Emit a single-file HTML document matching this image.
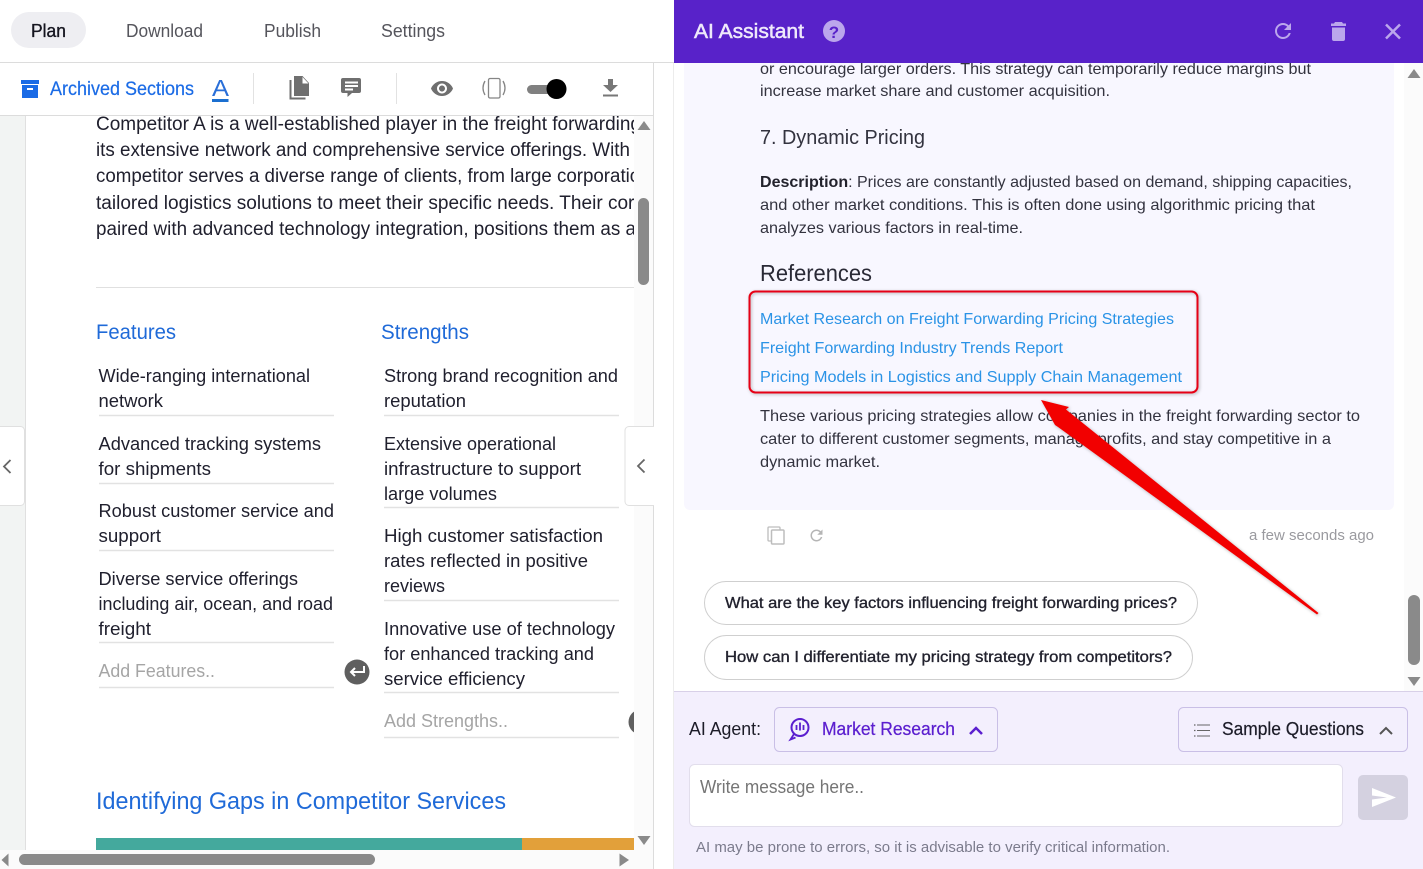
<!DOCTYPE html>
<html lang="en"><head><meta charset="utf-8"><title>AI Assistant</title>
<style>
html,body{margin:0;padding:0;width:1423px;height:869px;overflow:hidden;background:#fff}
svg{display:block}
text{font-family:"Liberation Sans",sans-serif;white-space:pre}
.t{font-size:18px;fill:#20202e}
.p{font-size:19px;fill:#20202e}
.c{font-size:16px;fill:#33333f}
.l{font-size:16px;fill:#2a93e6}
.g{font-size:18px;fill:#a5a5a5}
.b{fill:#1f6ad8}
.m{stroke-width:.35px}
.ln{stroke:#e2e2e2;stroke-width:1.5}
</style></head><body>
<svg width="1423" height="869" viewBox="0 0 1423 869" xmlns="http://www.w3.org/2000/svg">
<defs>
<clipPath id="lc"><rect x="26" y="116" width="608" height="734"/></clipPath>
<clipPath id="rc"><rect x="674" y="63" width="749" height="628"/></clipPath>
<filter id="sh" x="-10%" y="-10%" width="120%" height="120%"><feDropShadow dx="1" dy="1" stdDeviation="1.5" flood-color="#000" flood-opacity=".3"/></filter>
</defs>
<rect width="1423" height="869" fill="#fff"/>

<!-- LEFT top tabs -->
<rect x="11" y="12" width="75" height="36" rx="18" fill="#eeeef2"/>
<text x="31" y="37" font-size="18" fill="#15151f" stroke="#15151f" class="m" textLength="35" lengthAdjust="spacingAndGlyphs">Plan</text>
<text x="126" y="37" font-size="18" fill="#55555c" textLength="77" lengthAdjust="spacingAndGlyphs">Download</text>
<text x="264" y="37" font-size="18" fill="#55555c" textLength="57" lengthAdjust="spacingAndGlyphs">Publish</text>
<text x="381" y="37" font-size="18" fill="#55555c" textLength="64" lengthAdjust="spacingAndGlyphs">Settings</text>
<rect x="0" y="62" width="674" height="1" fill="#dcdcdc"/>

<!-- toolbar -->
<rect x="21" y="80" width="18" height="4" fill="#1a6be6"/>
<path d="M22 85h16v13H22z" fill="#1a6be6"/><rect x="27" y="88" width="6" height="2" fill="#fff"/>
<text x="50" y="95" font-size="19" fill="#1a6be6" stroke="#1a6be6" stroke-width=".2" textLength="144" lengthAdjust="spacingAndGlyphs">Archived Sections</text>
<text x="212" y="96" font-size="23" fill="#2a6fd8" textLength="17" lengthAdjust="spacingAndGlyphs">A</text>
<rect x="212" y="99" width="16.500" height="3" fill="#1b6fd0"/>
<rect x="253" y="73" width="1" height="31" fill="#e2e2e2"/>
<rect x="396" y="73" width="1" height="31" fill="#e2e2e2"/>
<path d="M290.500 80v18.500h15" fill="none" stroke="#6f6f6f" stroke-width="2"/>
<path d="M294 76h8.500l6.500 7v13h-15z" fill="#6f6f6f"/><path d="M302.500 77v6.500h6z" fill="#fff"/>
<path d="M343 78h16a2 2 0 0 1 2 2v11a2 2 0 0 1-2 2h-7l-4.500 4v-4H343a2 2 0 0 1-2-2V80a2 2 0 0 1 2-2z" fill="#6f6f6f"/>
<path d="M345 81.500h13v2h-13zM345 85h13v2h-13zM345 88.500h8v2h-8z" fill="#fff"/>
<path transform="translate(430,76.500)" fill="#6f6f6f" d="M12 4.500C7 4.500 2.730 7.610 1 12c1.730 4.390 6 7.500 11 7.500s9.270-3.110 11-7.500c-1.730-4.390-6-7.500-11-7.500zM12 17c-2.760 0-5-2.240-5-5s2.240-5 5-5 5 2.240 5 5-2.240 5-5 5zm0-8c-1.660 0-3 1.340-3 3s1.340 3 3 3 3-1.340 3-3-1.340-3-3-3z"/>
<rect x="488.500" y="78.500" width="11.500" height="19.500" rx="1.500" fill="none" stroke="#858585" stroke-width="1.300"/>
<path d="M485 81q-4 7 0 14M503 81q4 7 0 14" fill="none" stroke="#858585" stroke-width="1.300"/>
<rect x="527" y="85" width="28" height="9" rx="4.500" fill="#808080"/>
<circle cx="556.500" cy="89" r="10" fill="#000"/>
<path d="M608 79h5v6h5l-7.500 7-7.500-7h5z" fill="#777"/><rect x="603" y="94.500" width="15" height="2" fill="#777"/>
<rect x="0" y="115" width="654" height="1" fill="#dcdcdc"/>

<!-- left body -->
<rect x="0" y="116" width="25" height="734" fill="#f2f4f3"/>
<rect x="25" y="116" width="1" height="734" fill="#e0e0e0"/>
<g clip-path="url(#lc)">
<text class="p" x="96" y="130" textLength="545" lengthAdjust="spacingAndGlyphs">Competitor A is a well-established player in the freight forwarding</text>
<text class="p" x="96" y="156" textLength="534" lengthAdjust="spacingAndGlyphs">its extensive network and comprehensive service offerings. With</text>
<text class="p" x="96" y="182" textLength="564" lengthAdjust="spacingAndGlyphs">competitor serves a diverse range of clients, from large corporations</text>
<text class="p" x="96" y="209" textLength="549" lengthAdjust="spacingAndGlyphs">tailored logistics solutions to meet their specific needs. Their core</text>
<text class="p" x="96" y="235" textLength="540" lengthAdjust="spacingAndGlyphs">paired with advanced technology integration, positions them as a</text>
<rect x="96" y="287" width="538" height="1" fill="#e0e0e0"/>
<text class="b" font-size="21" x="96" y="339" textLength="80" lengthAdjust="spacingAndGlyphs">Features</text>
<text class="b" font-size="21" x="381" y="339" textLength="88" lengthAdjust="spacingAndGlyphs">Strengths</text>

<text class="t" x="98.500" y="382" textLength="211.500" lengthAdjust="spacingAndGlyphs">Wide-ranging international</text>
<text class="t" x="98.500" y="407" textLength="64.500" lengthAdjust="spacingAndGlyphs">network</text>
<line class="ln" x1="99" x2="334" y1="415.500" y2="415.500"/>
<text class="t" x="98.500" y="450" textLength="222.500" lengthAdjust="spacingAndGlyphs">Advanced tracking systems</text>
<text class="t" x="98.500" y="475" textLength="112.500" lengthAdjust="spacingAndGlyphs">for shipments</text>
<line class="ln" x1="99" x2="334" y1="483.500" y2="483.500"/>
<text class="t" x="98.500" y="517" textLength="235.500" lengthAdjust="spacingAndGlyphs">Robust customer service and</text>
<text class="t" x="98.500" y="542" textLength="62.500" lengthAdjust="spacingAndGlyphs">support</text>
<line class="ln" x1="99" x2="334" y1="550.500" y2="550.500"/>
<text class="t" x="98.500" y="585" textLength="199.500" lengthAdjust="spacingAndGlyphs">Diverse service offerings</text>
<text class="t" x="98.500" y="610" textLength="234.500" lengthAdjust="spacingAndGlyphs">including air, ocean, and road</text>
<text class="t" x="98.500" y="635" textLength="52.500" lengthAdjust="spacingAndGlyphs">freight</text>
<line class="ln" x1="99" x2="334" y1="642.500" y2="642.500"/>
<text class="g" x="98.500" y="677" textLength="116.500" lengthAdjust="spacingAndGlyphs">Add Features..</text>
<line class="ln" x1="99" x2="334" y1="687.500" y2="687.500"/>
<circle cx="357" cy="672" r="12.500" fill="#5f5f5f"/>
<path d="M364 666v6h-13M355 668l-4 4 4 4" fill="none" stroke="#fff" stroke-width="2"/>

<text class="t" x="384" y="382" textLength="234" lengthAdjust="spacingAndGlyphs">Strong brand recognition and</text>
<text class="t" x="384" y="407" textLength="82" lengthAdjust="spacingAndGlyphs">reputation</text>
<line class="ln" x1="384" x2="619" y1="415.500" y2="415.500"/>
<text class="t" x="384" y="450" textLength="172" lengthAdjust="spacingAndGlyphs">Extensive operational</text>
<text class="t" x="384" y="475" textLength="197" lengthAdjust="spacingAndGlyphs">infrastructure to support</text>
<text class="t" x="384" y="500" textLength="113" lengthAdjust="spacingAndGlyphs">large volumes</text>
<line class="ln" x1="384" x2="619" y1="507.500" y2="507.500"/>
<text class="t" x="384" y="542" textLength="219" lengthAdjust="spacingAndGlyphs">High customer satisfaction</text>
<text class="t" x="384" y="567" textLength="204" lengthAdjust="spacingAndGlyphs">rates reflected in positive</text>
<text class="t" x="384" y="592" textLength="61" lengthAdjust="spacingAndGlyphs">reviews</text>
<line class="ln" x1="384" x2="619" y1="600.500" y2="600.500"/>
<text class="t" x="384" y="635" textLength="231" lengthAdjust="spacingAndGlyphs">Innovative use of technology</text>
<text class="t" x="384" y="660" textLength="210" lengthAdjust="spacingAndGlyphs">for enhanced tracking and</text>
<text class="t" x="384" y="685" textLength="141" lengthAdjust="spacingAndGlyphs">service efficiency</text>
<line class="ln" x1="384" x2="619" y1="692.500" y2="692.500"/>
<text class="g" x="384" y="727" textLength="124" lengthAdjust="spacingAndGlyphs">Add Strengths..</text>
<line class="ln" x1="384" x2="619" y1="737.500" y2="737.500"/>
<circle cx="641" cy="722" r="12.500" fill="#5f5f5f"/>

<text class="b" font-size="24" x="96" y="809" textLength="410" lengthAdjust="spacingAndGlyphs">Identifying Gaps in Competitor Services</text>
<rect x="96" y="838" width="426" height="12" fill="#44a99d"/>
<rect x="522" y="838" width="112" height="12" fill="#e2a03a"/>
</g>

<!-- left vertical scrollbar -->
<rect x="634" y="116" width="19" height="734" fill="#fbfbfb"/>
<path d="M644 121l6.500 9h-13z" fill="#8a8a8a"/>
<path d="M644 845l-6.500-9h13z" fill="#8a8a8a"/>
<rect x="638" y="198" width="11" height="87" rx="5.500" fill="#8a8a8a"/>
<!-- horizontal scrollbar -->
<rect x="0" y="850" width="653" height="19" fill="#fbfbfb"/>
<path d="M1.500 860l7-6.500v13z" fill="#8a8a8a"/>
<path d="M629 860l-9.500-6.500v13z" fill="#8a8a8a"/>
<rect x="19" y="854" width="356" height="11" rx="5.500" fill="#8a8a8a"/>
<rect x="653" y="63" width="1" height="806" fill="#dcdcdc"/>

<!-- side tabs -->
<path d="M0 426.500h20.500a4 4 0 0 1 4 4v71a4 4 0 0 1-4 4H0" fill="#fff" stroke="#e0e0e0"/>
<path d="M10.500 460l-6.500 6.500 6.500 6.500" fill="none" stroke="#666" stroke-width="1.800"/>
<path d="M654 426.500h-25a4 4 0 0 0-4 4v71a4 4 0 0 0 4 4h25" fill="#fff" stroke="#e0e0e0"/>
<path d="M644.500 459.500l-6.500 6.500 6.500 6.500" fill="none" stroke="#666" stroke-width="1.800"/>

<!-- RIGHT content -->
<rect x="673" y="63" width="1" height="806" fill="#ececec"/>
<g clip-path="url(#rc)">
<rect x="684" y="50" width="710" height="460" rx="6" fill="#f8f7ff"/>
<text class="c" x="760" y="74" textLength="551" lengthAdjust="spacingAndGlyphs">or encourage larger orders. This strategy can temporarily reduce margins but</text>
<text class="c" x="760" y="96" textLength="350" lengthAdjust="spacingAndGlyphs">increase market share and customer acquisition.</text>
<text x="760" y="144" font-size="20" fill="#33333f" textLength="165" lengthAdjust="spacingAndGlyphs">7. Dynamic Pricing</text>
<text class="c" x="760" y="187" textLength="592" lengthAdjust="spacingAndGlyphs"><tspan font-weight="700" fill="#22222c">Description</tspan>: Prices are constantly adjusted based on demand, shipping capacities,</text>
<text class="c" x="760" y="210" textLength="555" lengthAdjust="spacingAndGlyphs">and other market conditions. This is often done using algorithmic pricing that</text>
<text class="c" x="760" y="233" textLength="263" lengthAdjust="spacingAndGlyphs">analyzes various factors in real-time.</text>
<text x="760" y="281" font-size="23" fill="#2a2a36" textLength="112" lengthAdjust="spacingAndGlyphs">References</text>
<text class="l" x="760" y="324" textLength="414" lengthAdjust="spacingAndGlyphs">Market Research on Freight Forwarding Pricing Strategies</text>
<text class="l" x="760" y="353" textLength="303" lengthAdjust="spacingAndGlyphs">Freight Forwarding Industry Trends Report</text>
<text class="l" x="760" y="382" textLength="422" lengthAdjust="spacingAndGlyphs">Pricing Models in Logistics and Supply Chain Management</text>
<text class="c" x="760" y="421" textLength="600" lengthAdjust="spacingAndGlyphs">These various pricing strategies allow companies in the freight forwarding sector to</text>
<text class="c" x="760" y="444" textLength="571" lengthAdjust="spacingAndGlyphs">cater to different customer segments, manage profits, and stay competitive in a</text>
<text class="c" x="760" y="467" textLength="120" lengthAdjust="spacingAndGlyphs">dynamic market.</text>

<!-- action row -->
<rect x="768" y="527" width="12" height="14" rx="1" fill="none" stroke="#bdbdbd" stroke-width="1.300"/>
<rect x="771.500" y="530" width="12.500" height="14" rx="1" fill="#fff" stroke="#bdbdbd" stroke-width="1.500"/>
<path transform="translate(807.500,526.500) scale(.75)" fill="#b5b5b5" d="M17.650 6.350C16.200 4.900 14.210 4 12 4c-4.420 0-7.990 3.580-7.990 8s3.570 8 7.990 8c3.730 0 6.840-2.550 7.730-6h-2.080c-.82 2.330-3.040 4-5.650 4-3.310 0-6-2.690-6-6s2.690-6 6-6c1.660 0 3.140.69 4.220 1.780L13 11h7V4l-2.350 2.350z"/>
<text x="1249" y="540" font-size="15" fill="#9a9a9f" textLength="125" lengthAdjust="spacingAndGlyphs">a few seconds ago</text>

<!-- pills -->
<rect x="704.500" y="581.500" width="493" height="43" rx="21.500" fill="#fff" stroke="#cfcfcf"/>
<text x="725" y="608" font-size="16" fill="#22222e" stroke="#22222e" class="m" textLength="452" lengthAdjust="spacingAndGlyphs">What are the key factors influencing freight forwarding prices?</text>
<rect x="704.500" y="635.500" width="488" height="44" rx="22" fill="#fff" stroke="#cfcfcf"/>
<text x="725" y="662" font-size="16" fill="#22222e" stroke="#22222e" class="m" textLength="447" lengthAdjust="spacingAndGlyphs">How can I differentiate my pricing strategy from competitors?</text>

<!-- right scrollbar -->
<rect x="1404" y="63" width="19" height="628" fill="#fbfbfb"/>
<path d="M1414 69l6.500 9h-13z" fill="#8a8a8a"/>
<path d="M1414 686l-6.500-9h13z" fill="#8a8a8a"/>
<rect x="1408" y="595" width="12" height="70" rx="6" fill="#8a8a8a"/>
</g>

<!-- header -->
<rect x="674" y="0" width="749" height="63" fill="#5822c9"/>
<text x="694" y="38" font-size="20" fill="#efe9fb" stroke="#efe9fb" stroke-width=".5" textLength="110" lengthAdjust="spacingAndGlyphs">AI Assistant</text>
<circle cx="834" cy="31" r="11" fill="#bba6ec"/>
<text x="834" y="38" font-size="17" font-weight="700" fill="#5822c9" text-anchor="middle">?</text>
<path transform="translate(1271,19)" fill="#bba6ec" d="M17.650 6.350C16.200 4.900 14.210 4 12 4c-4.420 0-7.990 3.580-7.990 8s3.570 8 7.990 8c3.730 0 6.840-2.550 7.730-6h-2.080c-.82 2.330-3.040 4-5.650 4-3.310 0-6-2.690-6-6s2.690-6 6-6c1.660 0 3.140.69 4.220 1.780L13 11h7V4l-2.350 2.350z"/>
<path d="M1335 22h7l1 1.500h3v2.500h-15v-2.500h3zM1332 27.500h13V39a2 2 0 0 1-2 2h-9a2 2 0 0 1-2-2z" fill="#bba6ec"/>
<path d="M1386 24.500l14 14M1400 24.500l-14 14" stroke="#bba6ec" stroke-width="2.500" fill="none"/>

<!-- bottom -->
<rect x="674" y="691" width="749" height="178" fill="#f3effd"/>
<rect x="674" y="691" width="749" height="1" fill="#d8d0e8"/>
<text x="689" y="735" font-size="18" fill="#1c1c28" textLength="72" lengthAdjust="spacingAndGlyphs">AI Agent:</text>
<rect x="774.500" y="707.500" width="223" height="44" rx="5" fill="none" stroke="#c9bfe6"/>
<circle cx="800" cy="727.500" r="8.500" fill="none" stroke="#5b1fcf" stroke-width="2"/>
<path d="M794 734l-3.500 5.500 5-2M796.500 725v5M800 722.500v8M803.500 725v5" fill="none" stroke="#5b1fcf" stroke-width="1.800"/>
<text x="822" y="735" font-size="18" fill="#5b1fcf" stroke="#5b1fcf" stroke-width=".25" textLength="133" lengthAdjust="spacingAndGlyphs">Market Research</text>
<path d="M970 734l6-6 6 6" fill="none" stroke="#5b1fcf" stroke-width="2.500"/>
<rect x="1178.500" y="707.500" width="229" height="44" rx="5" fill="none" stroke="#c9bfe6"/>
<path d="M1197 725h13M1197 730.500h13M1197 736h13" stroke="#666" stroke-width="1"/>
<path d="M1194 725h1.500M1194 730.500h1.500M1194 736h1.500" stroke="#666" stroke-width="1.200"/>
<text x="1222" y="735" font-size="18" fill="#1c1c28" stroke="#1c1c28" stroke-width=".2" textLength="142" lengthAdjust="spacingAndGlyphs">Sample Questions</text>
<path d="M1380 734l6-6 6 6" fill="none" stroke="#555" stroke-width="2"/>
<rect x="689.500" y="764.500" width="653" height="62" rx="5" fill="#fff" stroke="#e2deec"/>
<text x="700" y="793" font-size="18" fill="#757575" textLength="164" lengthAdjust="spacingAndGlyphs">Write message here..</text>
<rect x="1358" y="775" width="50" height="45" rx="5" fill="#d4d1e0"/>
<path d="M1372 788l24 9.500-24 9.500v-7.500l15-2-15-2z" fill="#fff"/>
<text x="696" y="852" font-size="15" fill="#7b7b8c" textLength="474" lengthAdjust="spacingAndGlyphs">AI may be prone to errors, so it is advisable to verify critical information.</text>

<!-- annotation -->
<rect x="749.500" y="291.500" width="448" height="101" rx="6" fill="none" stroke="#e60012" stroke-width="2" filter="url(#sh)"/>
<path d="M1041 400L1069 407L1066 409.500L1318.500 613L1317 614.500L1058 427L1055 425Z" fill="#f20000" filter="url(#sh)"/>
</svg>
</body></html>
